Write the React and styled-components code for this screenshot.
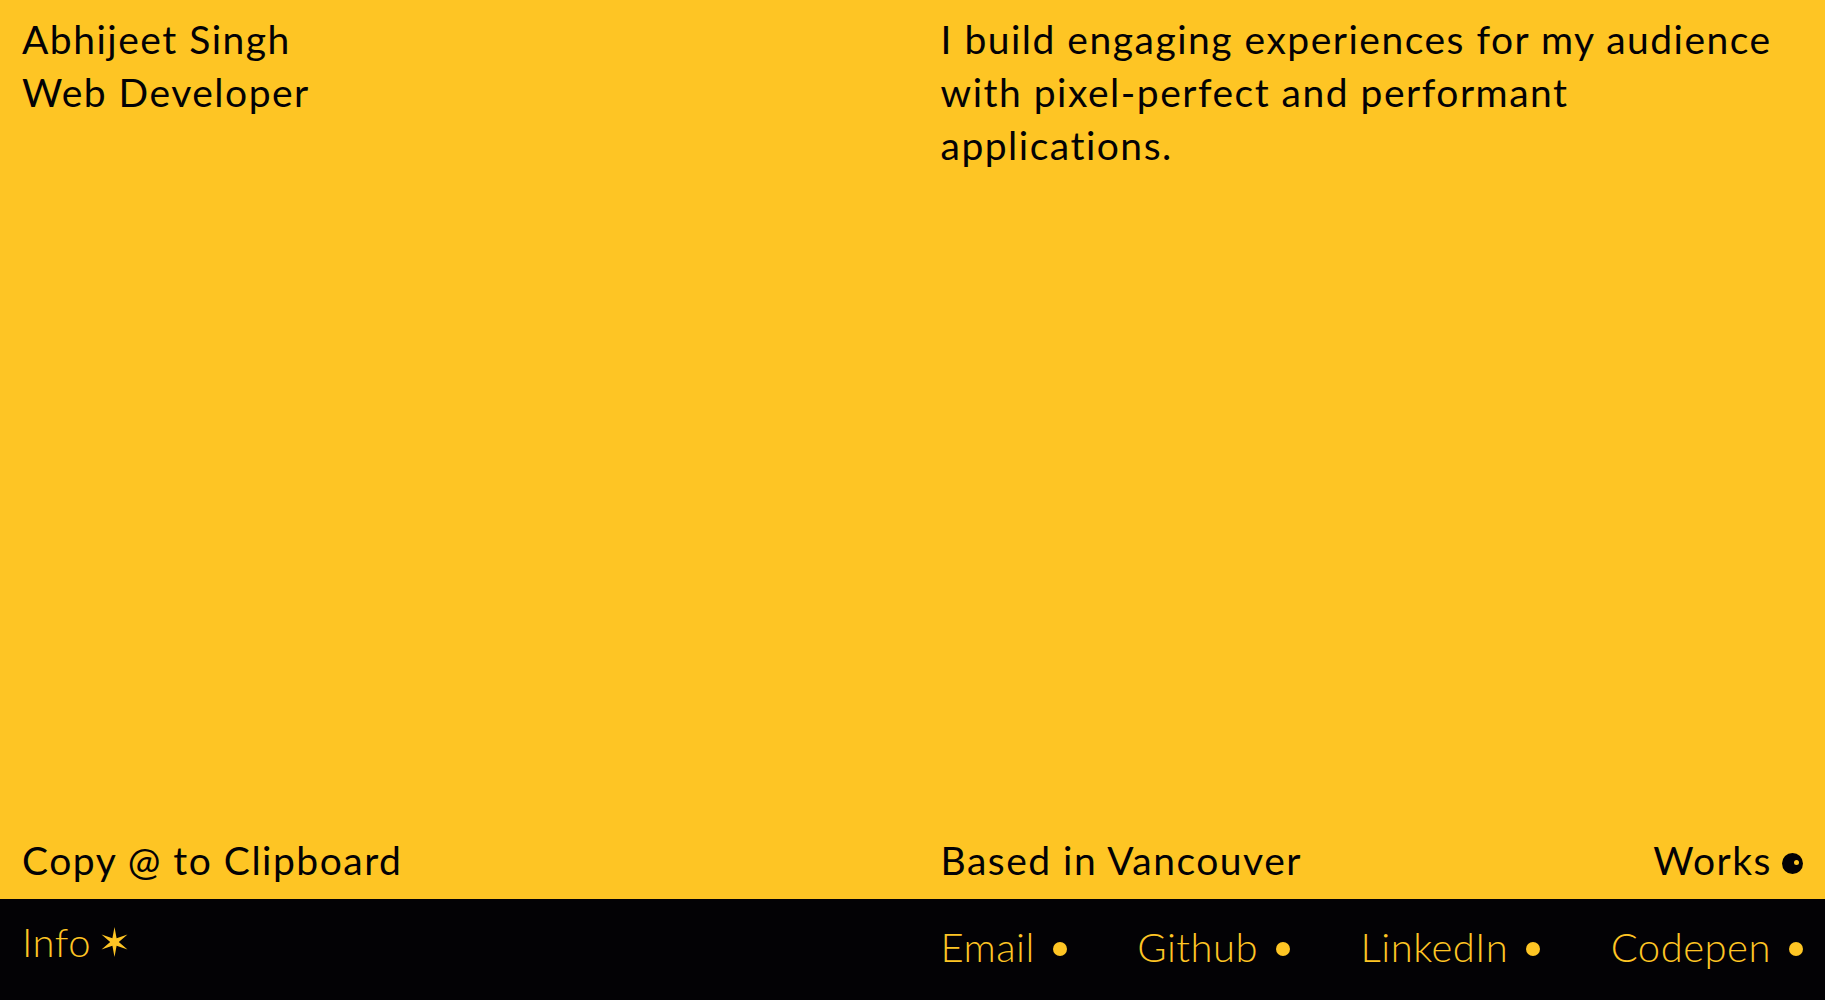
import React from "react";
import styled, { createGlobalStyle } from "styled-components";

const YELLOW = "#fec524";
const INK = "#030205";

const GlobalStyle = createGlobalStyle`
  html, body {
    margin: 0;
    padding: 0;
    background: ${YELLOW};
  }
  * {
    box-sizing: border-box;
  }
`;

const Page = styled.div`
  display: flex;
  flex-direction: column;
  min-height: 100vh;
  font-family: "Lato", "Noto Sans", sans-serif;
`;

const Hero = styled.main`
  flex: 1;
  display: grid;
  grid-template-columns: 1fr 1fr;
  grid-template-rows: 1fr auto;
  column-gap: 56px;
  padding: 13px 22px 12px;
  background: ${YELLOW};
  color: ${INK};
`;

const Text = styled.p`
  margin: 0;
  font-size: 39px;
  line-height: 53px;
  font-weight: 400;
  letter-spacing: 1.5px;
`;

const BottomRow = styled.div`
  display: flex;
  align-items: flex-end;
  justify-content: space-between;
`;

const WorksLink = styled.a`
  display: inline-flex;
  align-items: center;
  gap: 10px;
  color: ${INK};
  text-decoration: none;
  font-size: 39px;
  line-height: 53px;
  letter-spacing: 1.5px;
`;

const Eye = styled.span`
  position: relative;
  width: 21px;
  height: 21px;
  border-radius: 50%;
  background: ${INK};
  margin-top: 6px;

  &::after {
    content: "";
    position: absolute;
    top: 7px;
    right: 4px;
    width: 5px;
    height: 5px;
    border-radius: 50%;
    background: ${YELLOW};
  }
`;

const Footer = styled.footer`
  display: grid;
  grid-template-columns: 1fr 1fr;
  column-gap: 56px;
  align-items: center;
  height: 101px;
  padding: 0 22px 6px;
  background: ${INK};
  color: ${YELLOW};
`;

const InfoButton = styled.button`
  justify-self: start;
  display: inline-flex;
  align-items: center;
  gap: 10px;
  padding: 0;
  border: none;
  background: none;
  color: ${YELLOW};
  font-family: inherit;
  font-size: 40px;
  font-weight: 300;
  letter-spacing: 0.5px;
  line-height: 1;
  margin-top: -10px;
  cursor: pointer;
`;

const Links = styled.nav`
  display: flex;
  justify-content: space-between;
  align-items: center;
`;

const SocialLink = styled.a`
  display: inline-flex;
  align-items: center;
  gap: 18px;
  color: ${YELLOW};
  text-decoration: none;
  font-size: 40px;
  font-weight: 300;
  letter-spacing: 0.5px;
  line-height: 1;

  &::after {
    content: "";
    width: 14px;
    height: 14px;
    border-radius: 50%;
    background: ${YELLOW};
    margin-top: 4px;
  }
`;

function Star() {
  return (
    <svg width="27" height="30" viewBox="0 0 27 30" aria-hidden="true">
      <path
        fill={YELLOW}
        d="M13.5 0 L15.6 11.2 L26.5 7.5 L17.8 15 L26.5 22.5 L15.6 18.8 L13.5 30 L11.4 18.8 L0.5 22.5 L9.2 15 L0.5 7.5 L11.4 11.2 Z"
      />
    </svg>
  );
}

const links = ["Email", "Github", "LinkedIn", "Codepen"];

export default function App() {
  return (
    <>
      <GlobalStyle />
      <Page>
        <Hero>
          <Text>
            Abhijeet Singh
            <br />
            Web Developer
          </Text>
          <Text>
            I build engaging experiences for my audience with pixel-perfect and
            performant applications.
          </Text>
          <BottomRow>
            <Text>Copy @ to Clipboard</Text>
          </BottomRow>
          <BottomRow>
            <Text>Based in Vancouver</Text>
            <WorksLink href="#works">
              Works <Eye />
            </WorksLink>
          </BottomRow>
        </Hero>
        <Footer>
          <InfoButton type="button">
            Info <Star />
          </InfoButton>
          <Links>
            {links.map((name) => (
              <SocialLink key={name} href="#">
                {name}
              </SocialLink>
            ))}
          </Links>
        </Footer>
      </Page>
    </>
  );
}
